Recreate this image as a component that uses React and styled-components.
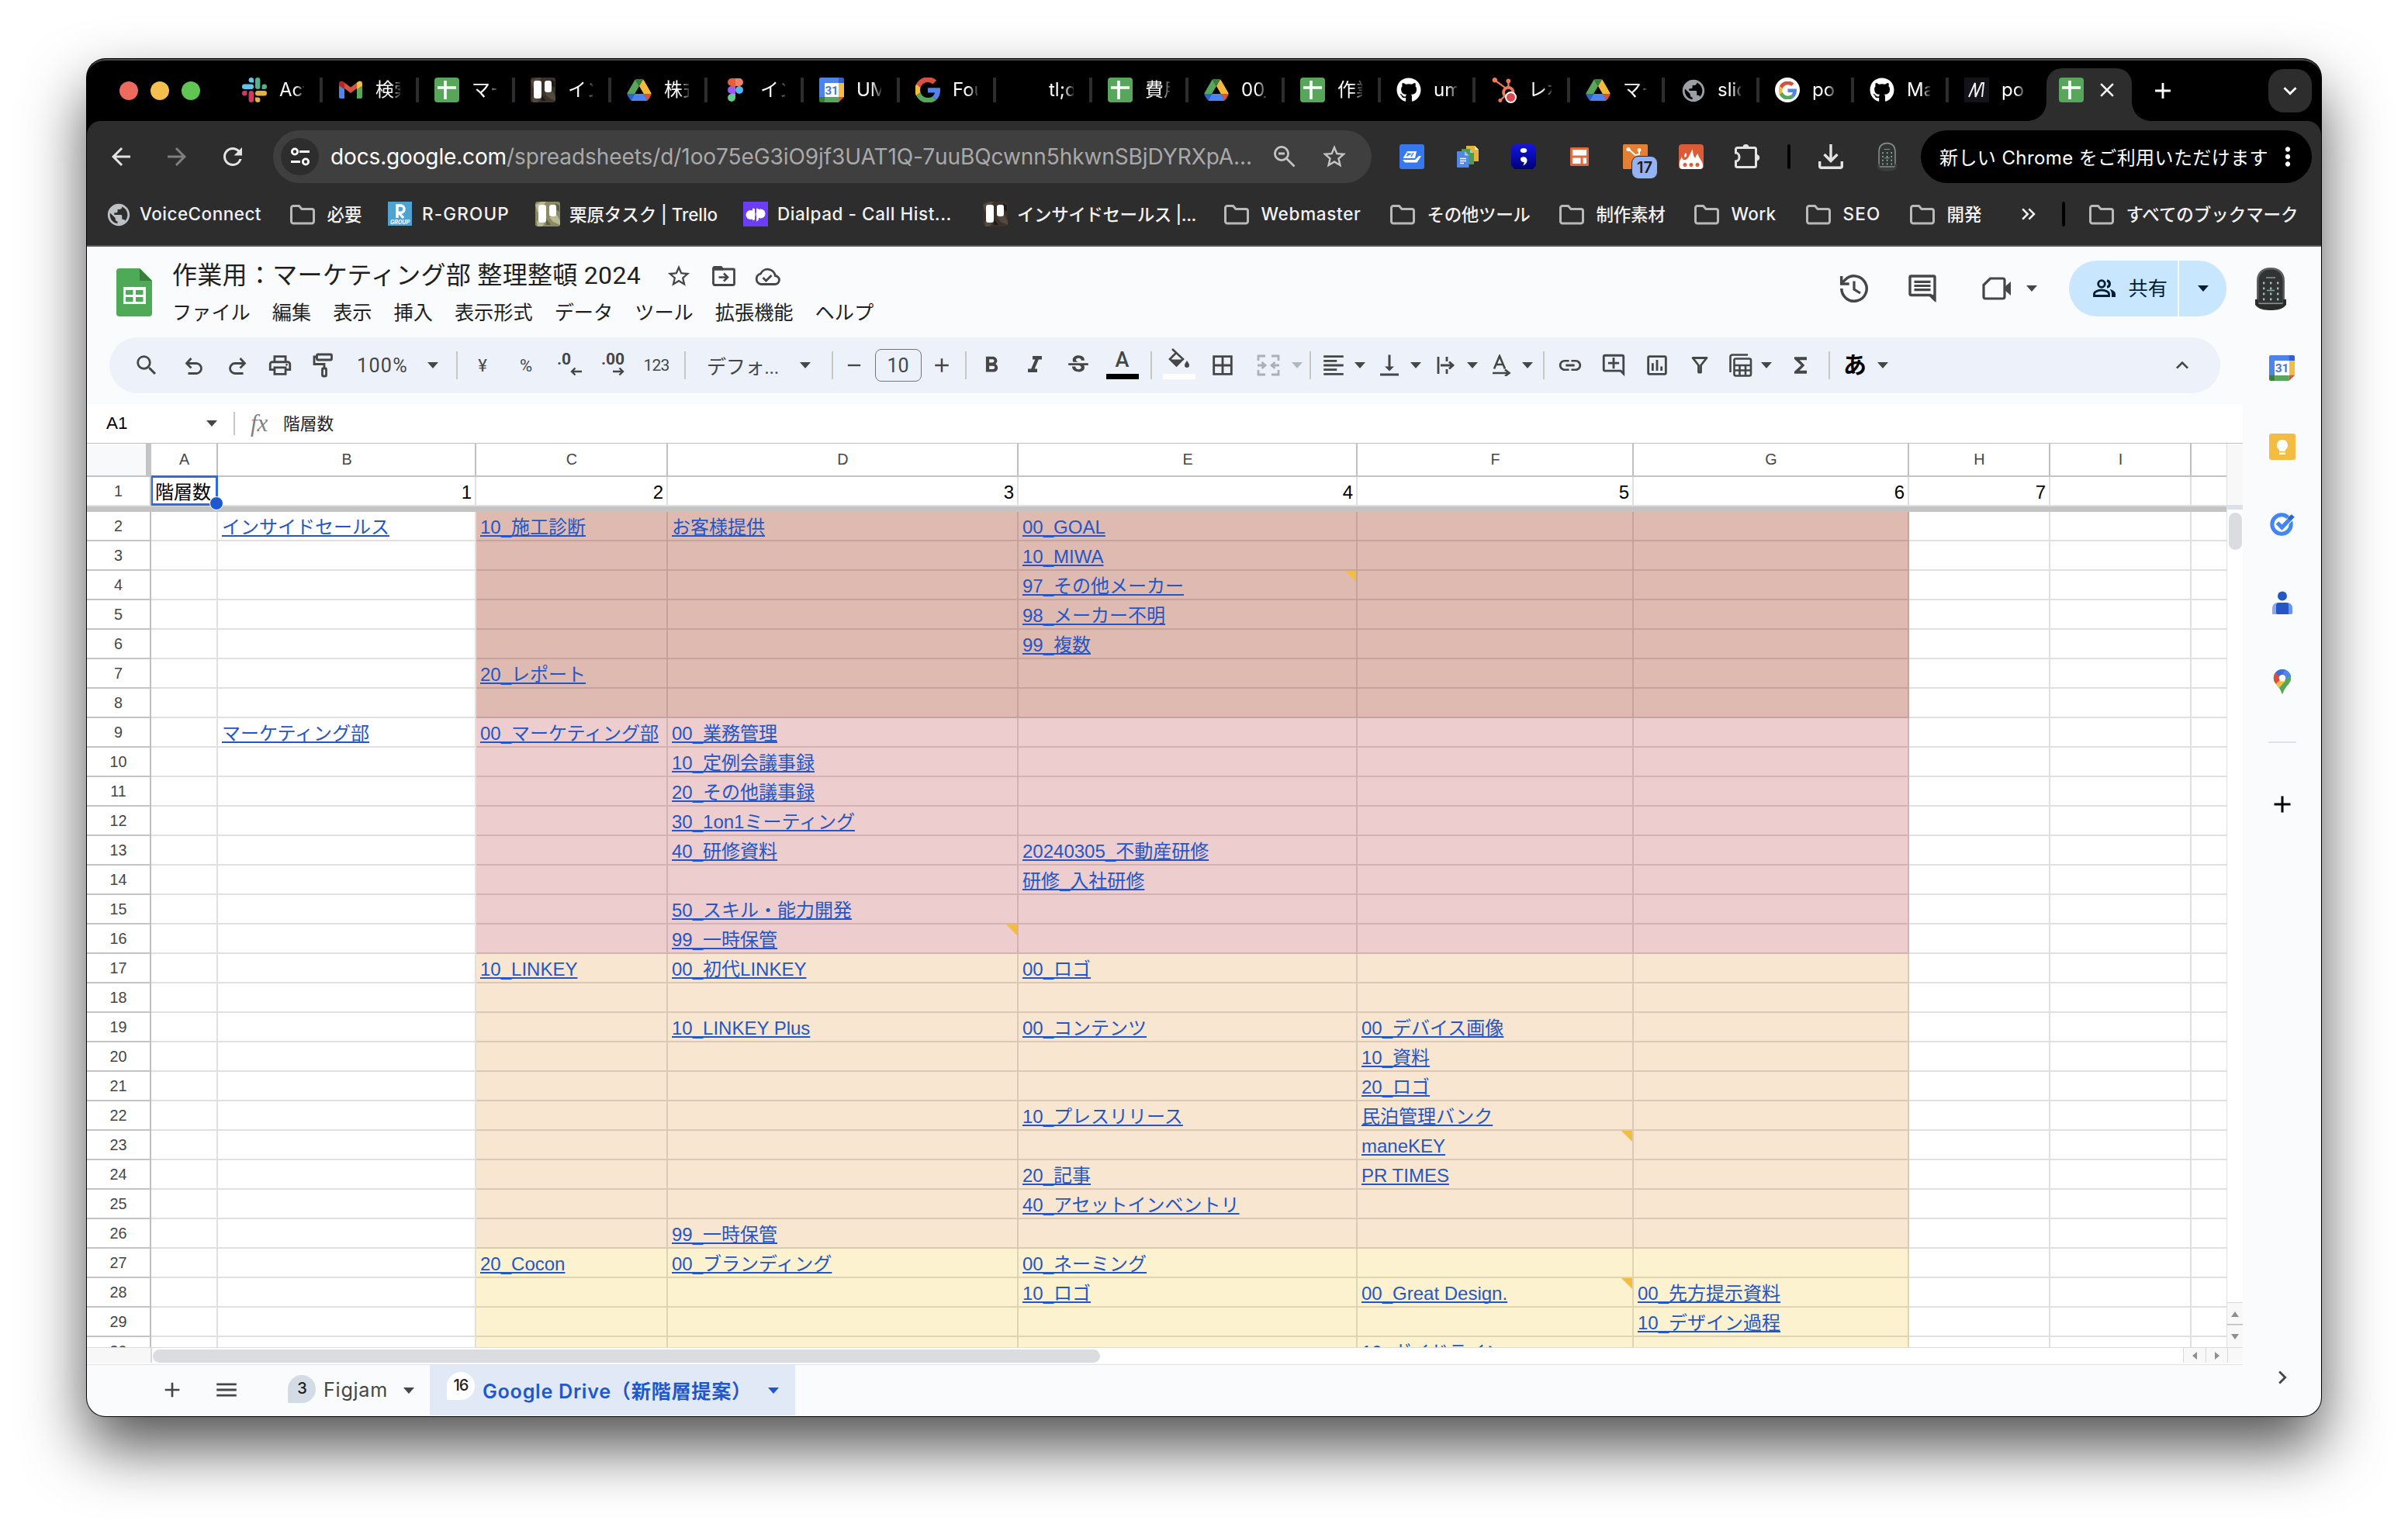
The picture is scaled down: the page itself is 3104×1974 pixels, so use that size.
import React, { useLayoutEffect, useRef, useState } from "react";
import styled, { createGlobalStyle, css } from "styled-components";
import {
  MdSearch, MdUndo, MdRedo, MdOutlinePrint, MdFormatBold, MdFormatItalic, MdStrikethroughS,
  MdBorderAll, MdFormatAlignLeft, MdVerticalAlignBottom, MdInsertLink,
  MdOutlineAddComment, MdOutlineInsertChart, MdFunctions, MdKeyboardArrowUp, MdStarBorder,
  MdMenu, MdAdd, MdRemove, MdChevronRight, MdArrowBack,
  MdArrowForward, MdRefresh, MdMoreVert, MdClose, MdKeyboardArrowDown, MdPublic,
  MdKeyboardDoubleArrowRight,
} from "react-icons/md";
import { FaGithub, FaHubspot } from "react-icons/fa";

const UI = `Inter, "Noto Sans CJK JP", sans-serif`;
const ROBOTO = `Roboto, "Noto Sans CJK JP", sans-serif`;
const ARIAL = `"Liberation Sans", "Noto Sans CJK JP", sans-serif`;

const Global = createGlobalStyle`
  * { box-sizing: border-box; }
  html, body { margin: 0; background: #fff; }
  body { width: 3104px; height: 1974px; overflow: hidden; }
  svg { display: block; flex: none; }
`;

/* ---------- text that spreads to a set width ---------- */
const FitSpan = styled.span`
  display: inline-block;
  white-space: pre;
  flex: none;
  color: ${(p) => p.$color || "inherit"};
`;
function Fit({ w, color, children }) {
  const ref = useRef(null);
  const [ls, setLs] = useState(0);
  useLayoutEffect(() => {
    const natural = ref.current.getBoundingClientRect().width;
    setLs((w - natural) / Array.from(children).length);
  }, [w, children]);
  return <FitSpan ref={ref} $color={color} style={{ letterSpacing: `${ls}px` }}>{children}</FitSpan>;
}

/* ---------- window ---------- */
const Desktop = styled.div`
  width: 3104px;
  height: 1974px;
  padding: 76px 112px 0;
  overflow: hidden;
  background: #fff;
`;
const Window = styled.div`
  width: 2880px;
  height: 1750px;
  display: flex;
  flex-direction: column;
  overflow: hidden;
  border-radius: 24px;
  background: #000;
  box-shadow: 0 0 0 1px #000, 0 40px 80px rgba(0, 0, 0, 0.68);
`;

/* ---------- tab strip ---------- */
const TabStrip = styled.div`
  height: 80px;
  flex: none;
  display: flex;
  align-items: center;
  background: #000;
  border-top: 2px solid #4c4c4c;
  border-radius: 24px 24px 0 0;
  font: 400 24px ${UI};
  color: #fff;
`;
const Lights = styled.div`
  display: flex;
  gap: 16px;
  width: 200px;
  padding-left: 42px;
`;
const Light = styled.i`
  width: 24px;
  height: 24px;
  border-radius: 50%;
  background: ${(p) => p.$c};
`;
const Tab = styled.div`
  width: ${(p) => p.$w}px;
  height: 32px;
  margin-bottom: 2px;
  flex: none;
  display: flex;
  align-items: center;
  gap: 16px;
  border-right: ${(p) => (p.$last ? "0" : "4px solid #2d2d2d")};
  padding-left: ${(p) => (p.$first ? 0 : 20)}px;
`;
const TabText = styled.div`
  width: ${(p) => p.$w}px;
  overflow: hidden;
  white-space: nowrap;
  line-height: 36px;
  mask-image: linear-gradient(90deg, #000 60%, rgba(0, 0, 0, 0.2) 100%);
`;
const ActiveTab = styled.div`
  align-self: flex-end;
  width: 110px;
  height: 68px;
  margin-left: 4px;
  flex: none;
  display: flex;
  align-items: center;
  gap: 15px;
  padding: 0 0 12px 16px;
  background: #2d2d2d;
  border-radius: 20px 20px 0 0;
  position: relative;
  &::before, &::after {
    content: "";
    position: absolute;
    bottom: 0;
    width: 24px;
    height: 24px;
  }
  &::before { left: -24px; background: radial-gradient(circle at 0 0, transparent 23.5px, #2d2d2d 24px); }
  &::after { right: -24px; background: radial-gradient(circle at 100% 0, transparent 23.5px, #2d2d2d 24px); }
`;
const NewTab = styled.div`
  margin-left: 23px;
`;
const TabMenu = styled.div`
  width: 56px;
  height: 56px;
  margin: 0 12px 0 auto;
  display: grid;
  place-items: center;
  border-radius: 20px;
  background: #2d2d2d;
`;

/* ---------- browser toolbar ---------- */
const Chrome = styled.div`
  height: 162px;
  flex: none;
  background: #2d2d2d;
  border-radius: 18px 18px 0 0;
  border-bottom: 2px solid #545457;
  color: #e3e3e3;
  font-family: ${UI};
`;
const NavRow = styled.div`
  height: 92px;
  display: flex;
  align-items: center;
`;
const NavBtn = styled.div`
  width: 72px;
  display: grid;
  place-items: center;
  opacity: ${(p) => (p.$dim ? 0.45 : 1)};
`;
const NavGroup = styled.div`
  display: flex;
  width: 240px;
  padding-left: 8px;
`;
const UrlBar = styled.div`
  width: 1416px;
  height: 68px;
  flex: none;
  display: flex;
  align-items: center;
  padding-left: 10px;
  border-radius: 34px;
  background: #3f3f3f;
  font-size: 28px;
`;
const SiteInfo = styled.div`
  width: 49px;
  height: 48px;
  margin-right: 15px;
  border-radius: 50%;
  display: grid;
  place-items: center;
  background: #2d2d2d;
`;
const UrlIcon = styled.div`
  margin-left: ${(p) => p.$ml}px;
`;
const Extensions = styled.div`
  display: flex;
  align-items: center;
  flex: none;
  width: 708px;
  padding-left: 16px;
`;
const Ext = styled.div`
  width: 72px;
  height: 48px;
  flex: none;
  display: flex;
  align-items: center;
  justify-content: center;
  position: relative;
`;
const ExtBadge = styled.div`
  position: absolute;
  left: 31px;
  top: 23px;
  width: 34px;
  height: 30px;
  border: 1px solid #2d2d2d;
  border-radius: 9px;
  background: #94b3f4;
  color: #1b1b1b;
  font: 600 20px/28px ${UI};
  text-align: center;
`;
const DarkSep = styled.i`
  width: 4px;
  height: 32px;
  flex: none;
  border-radius: 2px;
  background: #000;
  margin-left: ${(p) => p.$ml || 0}px;
  margin-right: ${(p) => p.$mr || 0}px;
`;
const UpdatePill = styled.div`
  width: 504px;
  height: 68px;
  flex: none;
  display: flex;
  align-items: center;
  padding-left: 24px;
  border-radius: 34px;
  background: #000;
  color: #fff;
  font-size: 24px;
`;
const PillText = styled.div`
  padding-bottom: 2px;
`;
const PillMenu = styled.div`
  margin-left: 6px;
`;
const Bookmarks = styled.div`
  height: 64px;
  display: flex;
  align-items: center;
  padding: 0 0 8px 24px;
  font-size: 22.5px;
  font-weight: 500;
  color: #f1f1f1;
`;
const Bookmark = styled.div`
  width: ${(p) => p.$w}px;
  flex: none;
  display: flex;
  align-items: center;
  gap: ${(p) => (p.$folder ? 15.5 : 12)}px;
  & > span { margin-bottom: 2px; }
`;

/* ---------- document header ---------- */
const Page = styled.div`
  flex: 1;
  display: flex;
  flex-direction: column;
  background: #f9fbfd;
  color: #1f1f1f;
`;
const DocHeader = styled.div`
  height: 106px;
  flex: none;
  display: flex;
  align-items: flex-start;
  padding: 0 45px 0 38px;
`;
const LogoBox = styled.div`
  padding-top: 28px;
  width: 72px;
`;
const TitleCol = styled.div`
  padding-top: 8px;
`;
const TitleRow = styled.div`
  height: 54px;
  display: flex;
  align-items: center;
  font: 400 32px ${ROBOTO};
  padding-bottom: 3px;
  color: #1f1f1f;
`;
const TitleIcon = styled.div`
  width: 58px;
  margin-left: ${(p) => p.$ml || 0}px;
  padding-top: 9px;
  display: grid;
  place-items: center;
  color: #444746;
`;
const MenuRow = styled.div`
  height: 42px;
  display: flex;
  align-items: center;
  gap: 28px;
  font: 400 25.2px ${ROBOTO};
  white-space: nowrap;
`;
const HeaderRight = styled.div`
  margin: 18px 0 0 auto;
  height: 72px;
  display: flex;
  align-items: center;
  color: #444746;
`;
const HeaderBtn = styled.div`
  width: 88px;
  display: grid;
  place-items: center;
`;
const MeetBtn = styled.div`
  width: 145px;
  display: flex;
  align-items: center;
  gap: 19px;
  padding-left: 33px;
`;
const Share = styled.div`
  width: 203px;
  height: 72px;
  margin-right: 37px;
  display: flex;
  border-radius: 36px;
  overflow: hidden;
  color: #001d35;
  gap: 2px;
  font: 400 25.2px ${ROBOTO};
`;
const ShareMain = styled.div`
  width: 140px;
  padding-left: 31px;
  display: flex;
  align-items: center;
  gap: 15.5px;
  background: #c8e6fd;
  & > span { margin-bottom: 4px; }
`;
const ShareMore = styled.div`
  flex: 1;
  display: flex;
  align-items: center;
  padding-left: 24px;
  background: #c8e6fd;
`;
const Caret = styled.i`
  flex: none;
  width: 0;
  height: 0;
  border: 7px solid transparent;
  border-top: 8px solid ${(p) => p.$c || "#444746"};
  border-bottom: 0;
  margin-left: ${(p) => p.$ml || 0}px;
`;

/* ---------- body ---------- */
const Body = styled.div`
  flex: 1;
  display: flex;
  min-height: 0;
`;
const Main = styled.div`
  width: 2779px;
  flex: none;
  display: flex;
  flex-direction: column;
  padding-top: 11px;
`;
const Toolbar = styled.div`
  width: 2721px;
  height: 72px;
  margin: 0 0 14px 29px;
  flex: none;
  display: flex;
  align-items: center;
  border-radius: 36px;
  background: #edf2fa;
  color: #444746;
  font: 400 25.2px ${ROBOTO};
`;
const Slot = styled.div`
  width: ${(p) => p.$w || 56}px;
  margin-left: ${(p) => p.$ml || 0}px;
  flex: none;
  display: grid;
  place-items: center;
  white-space: nowrap;
  opacity: ${(p) => (p.$off ? 0.38 : 1)};
  font-size: ${(p) => p.$fs || 25.2}px;
`;
const Kana = styled.b`
  font-weight: 700;
  line-height: 36px;
  color: #000;
`;
const Sep = styled.i`
  width: 2px;
  height: 36px;
  flex: none;
  background: #c7c7c7;
  margin-left: ${(p) => p.$ml || 0}px;
`;
const SizeBox = styled.div`
  width: 60px;
  height: 42px;
  margin-left: 6px;
  display: grid;
  place-items: center;
  border: 1.5px solid #747775;
  border-radius: 8px;
  font-size: 25px;
`;
const Decimal = styled.div`
  height: 36px;
  width: 32px;
  display: flex;
  flex-direction: column;
  font: 700 21px/20px ${ROBOTO};
  align-items: ${(p) => (p.$end ? "center" : "flex-start")};
  svg { align-self: flex-end; }
`;
const ColorStack = styled.div`
  display: flex;
  flex-direction: column;
  align-items: center;
  justify-content: flex-end;
  height: 52px;
  margin-top: -16px;
  font: 500 27px/28px ${ROBOTO};
`;
const ColorBar = styled.i`
  width: 42px;
  height: 7px;
  margin-top: ${(p) => (p.$gap ? p.$gap : 2)}px;
  background: ${(p) => p.$c};
`;
const Collapse = styled.div`
  margin: 0 33px 0 auto;
`;

/* ---------- formula bar ---------- */
const FormulaBar = styled.div`
  height: 51px;
  flex: none;
  display: flex;
  align-items: center;
  padding-left: 25px;
  background: #fff;
  border-bottom: 1px solid #c0c0c0;
  font: 400 22.5px ${ARIAL};
  color: #000;
`;
const NameBox = styled.div`
  width: 129px;
`;
const Thin = styled.i`
  width: 2px;
  height: 30px;
  background: #c7c7c7;
  margin: 0 20px 0 21px;
`;
const Fx = styled.div`
  width: 42px;
  font: italic 400 31px/32px "Liberation Serif", serif;
  color: #808080;
  letter-spacing: 0;
`;
const FormulaText = styled.div`
  font-size: 21.8px;
  padding-bottom: 4px;
  color: #1f1f1f;
`;

/* ---------- grid ---------- */
const GridArea = styled.div`
  height: 1165px;
  flex: none;
  display: flex;
  background: #fff;
`;
const Sheet = styled.div`
  width: 2758px;
  height: 1165px;
  flex: none;
  overflow: hidden;
`;
const cols = css`
  display: grid;
  grid-template-columns: 83px 86px 333px 247px 452px 437px 356px 355px 182px 182px 45px;
`;
const HeadRow = styled.div`
  ${cols}
  height: 43px;
  border-bottom: 2px solid #c4c4c4;
`;
const Corner = styled.div`
  background: #f8f9fa;
  border-right: 7px solid #c4c4c4;
`;
const ColHead = styled.div`
  display: grid;
  place-items: center;
  padding-left: 1px;
  border-right: ${(p) => (p.$last ? 0 : 2)}px solid #c0c0c0;
  font: 400 19.8px ${ARIAL};
  color: #444746;
`;
const Row = styled.div`
  ${cols}
  height: 38px;
`;
const RowHead = styled.div`
  display: grid;
  place-items: center;
  border-right: 2px solid #c0c0c0;
  border-bottom: 2px solid ${(p) => (p.$frozen ? "#e1e1e1" : "#c4c4c4")};
  font: 400 19.8px ${ARIAL};
  color: #444746;
`;
const Cell = styled.div`
  position: relative;
  display: flex;
  align-items: flex-end;
  justify-content: ${(p) => (p.$right ? "flex-end" : "flex-start")};
  padding: 0 4px 2px 5px;
  border-right: ${(p) => (p.$last ? 0 : 2)}px solid rgba(0, 0, 0, 0.12);
  border-bottom: 2px solid rgba(0, 0, 0, 0.12);
  background: ${(p) => p.$bg || "#fff"};
  font: 400 24px/28px ${ARIAL};
  color: #000;
  white-space: nowrap;
`;
const Link = styled.a`
  color: #2456c8;
  text-decoration: underline 2px;
  text-underline-offset: 2px;
  text-decoration-skip-ink: none;
`;
const Note = styled.i`
  position: absolute;
  right: 0;
  top: 0;
  border-top: 14px solid #f2bd42;
  border-left: 14px solid transparent;
`;
const Selection = styled.i`
  position: absolute;
  z-index: 2;
  inset: -2px -2px -1px 0;
  border: 3px solid #2f6ade;
  border-left-width: 2px;
  &::after {
    content: "";
    position: absolute;
    right: -10px;
    bottom: -9px;
    width: 16px;
    height: 16px;
    border-radius: 50%;
    border: 1px solid #fff;
    background: #1f57cf;
  }
`;
const Freeze = styled.div`
  height: 7px;
  background: #c4c4c4;
`;
const VScroll = styled.div`
  width: 21px;
  display: flex;
  flex-direction: column;
  align-items: flex-end;
  border-left: 1px solid #e1e1e1;
`;
const VHead = styled.div`
  width: 20px;
  height: 79px;
  background: #f8f8f8;
`;
const VBand = styled.div`
  width: 20px;
  height: 6px;
  background: #dbe0e9;
`;
const VThumb = styled.div`
  width: 17px;
  height: 48px;
  margin: 4px 1px auto 0;
  border-radius: 9px;
  background: #dadce0;
`;
const VBtn = styled.div`
  width: 20px;
  height: 29px;
  display: grid;
  place-items: center;
  background: #f8f8f8;
  border-top: 1px solid #d9d9d9;
  box-shadow: ${(p) => (p.$mark ? "inset 0 -2px 0 -1px #a8baf0" : "none")};
`;
const Tri = styled.i`
  width: 0;
  height: 0;
  border: 5px solid transparent;
  ${(p) => p.$d === "up" && "border-bottom: 7px solid #8f8f8f; border-top: 0;"}
  ${(p) => p.$d === "down" && "border-top: 7px solid #8f8f8f; border-bottom: 0;"}
  ${(p) => p.$d === "left" && "border-right: 6px solid #8f8f8f; border-left: 0;"}
  ${(p) => p.$d === "right" && "border-left: 6px solid #8f8f8f; border-right: 0;"}
`;
const HScroll = styled.div`
  height: 20px;
  margin-bottom: 2px;
  flex: none;
  display: flex;
  border-top: 1px solid #dcdcdc;
  background: #fff;
`;
const HHead = styled.div`
  width: 84px;
  background: #f7f7f7;
  border-right: 2px solid #d9d9dc;
`;
const HThumb = styled.div`
  width: 1221px;
  height: 17px;
  margin: 2px auto 0 1px;
  border-radius: 9px;
  background: #dadce0;
`;
const HBtn = styled.div`
  width: ${(p) => p.$w}px;
  display: grid;
  place-items: center;
  background: #f8f8f8;
  border-left: 1px solid #d9d9d9;
`;

/* ---------- sheet tabs ---------- */
const SheetBar = styled.div`
  flex: 1;
  display: flex;
  align-items: stretch;
  border-top: 1px solid #e0e2e6;
  padding-left: 75px;
  color: #444746;
  font: 500 25.2px ${UI};
`;
const BarIcon = styled.div`
  width: 70px;
  padding-bottom: 2px;
  display: grid;
  place-items: center;
`;
const SheetTab = styled.div`
  display: flex;
  align-items: center;
  width: ${(p) => p.$w}px;
  margin-bottom: 1px;
  padding-left: ${(p) => p.$pl}px;
  background: ${(p) => (p.$on ? "#e1e9f7" : "transparent")};
  color: ${(p) => (p.$on ? "#1f57cc" : "#444746")};
  font-weight: ${(p) => (p.$on ? 600 : 400)};
  & > span { margin-bottom: 2px; }
`;
const Count = styled.div`
  width: 36px;
  height: 36px;
  margin: 0 10px ${(p) => p.$lift}px 0;
  border-radius: 18px 18px 18px 2px;
  background: ${(p) => p.$bg};
  color: #1f1f1f;
  font: 500 20px/35px ${UI};
  letter-spacing: -1px;
  text-align: center;
`;

/* ---------- side panel ---------- */
const Side = styled.div`
  width: 101px;
  display: flex;
  flex-direction: column;
  align-items: center;
`;
const SideSlot = styled.div`
  height: 101px;
  display: grid;
  place-items: center;
`;
const SideLine = styled.i`
  width: 36px;
  height: 2px;
  margin: 27px 0 28px;
  background: #dfe1e5;
`;
const SideFoot = styled.div`
  margin: auto 0 33px;
  color: #444746;
`;

/* ---------- drawings ---------- */
const Slack = () => (
  <svg width="32" height="32" viewBox="0 0 32 32">
    <g fill="#62c6ea"><rect y="8.6" width="15" height="6.4" rx="3.2" /><path d="M15 6.4h-3.2A3.2 3.2 0 1 1 15 3.2z" /></g>
    <g fill="#57b08c"><rect x="17" width="6.4" height="15" rx="3.2" /><path d="M25.6 15v-3.2a3.2 3.2 0 1 1 3.2 3.2z" /></g>
    <g fill="#e3b04b"><rect x="17" y="17" width="15" height="6.4" rx="3.2" /><path d="M17 25.6h3.2a3.2 3.2 0 1 1-3.2 3.2z" /></g>
    <g fill="#cf3a62"><rect x="8.6" y="17" width="6.4" height="15" rx="3.2" /><path d="M6.4 17v3.2A3.2 3.2 0 1 1 3.2 17z" /></g>
  </svg>
);
const Gmail = () => (
  <svg width="32" height="32" viewBox="0 0 32 32">
    <path d="M1 9.500 8 14v13H3a2 2 0 0 1-2-2z" fill="#4f86ec" />
    <path d="M31 9.500 24 14v13h5a2 2 0 0 0 2-2z" fill="#58a55c" />
    <path d="M8 14V6.500l8 6 8-6V14l-8 6z" fill="#d85140" />
    <path d="M24 6.500l2-1.400c2-1.500 5-.200 5 2.400v3L24 15z" fill="#f2bd42" />
    <path d="M8 6.500 6 5.100C4 3.600 1 4.900 1 7.500v3L8 15z" fill="#b5291e" />
  </svg>
);
const SheetFav = () => (
  <svg width="32" height="32" viewBox="0 0 32 32">
    <rect width="32" height="32" rx="4" fill="#58a55c" />
    <path d="M12.200 4h3.600v24h-3.600zM4 11.200h24v3.600H4z" fill="#fff" />
  </svg>
);
const Trello = ({ light }) => (
  <svg width="32" height="32" viewBox="0 0 32 32">
    <rect width="32" height="32" rx="3" fill={light ? "#8b8a66" : "#3b322b"} />
    <path d="M0 4 8 0h6L3 14zM18 20l10-3 4 8v5l-9-4zM2 25l10 3-3 4H3z" fill={light ? "#b9b890" : "#55483c"} />
    <path d="M26 2l5 3v8l-4-3zM14 22l6 8h-6z" fill={light ? "#5e6244" : "#1f1a18"} />
    <rect x="4" y="4" width="10" height="23" rx="3" fill="#fff" />
    <rect x="18" y="4" width="9" height="15" rx="3" fill="#fff" />
  </svg>
);
const Drive = () => (
  <svg width="32" height="32" viewBox="-1 -4 89.300 86">
    <path d="m6.600 66.850 3.850 6.650c.8 1.400 1.950 2.500 3.300 3.300l13.750-23.800h-27.500c0 1.550.4 3.100 1.200 4.500z" fill="#2d62d0" />
    <path d="m43.650 25-13.750-23.800c-1.350.8-2.500 1.900-3.300 3.300l-25.400 44a9.060 9.060 0 0 0 -1.200 4.500h27.500z" fill="#58a55c" />
    <path d="m73.550 76.800c1.350-.8 2.500-1.900 3.300-3.300l1.600-2.750 7.650-13.250c.8-1.400 1.200-2.950 1.200-4.500h-27.500l5.850 11.500z" fill="#d85140" />
    <path d="m43.650 25 13.750-23.800c-1.350-.8-2.900-1.200-4.500-1.200h-18.500c-1.600 0-3.150.45-4.500 1.200z" fill="#3b7f3c" />
    <path d="m59.800 53h-32.300l-13.750 23.800c1.350.8 2.900 1.200 4.500 1.200h50.800c1.600 0 3.150-.45 4.500-1.200z" fill="#4a84f0" />
    <path d="m73.400 26.500-12.700-22c-.8-1.400-1.950-2.500-3.300-3.300l-13.750 23.800 16.150 28h27.450c0-1.550-.4-3.100-1.200-4.500z" fill="#f2b93c" />
  </svg>
);
const Figma = () => (
  <svg width="32" height="32" viewBox="-6 0 32 30">
    <path d="M5 0h5v10H5A5 5 0 0 1 5 0z" fill="#e5603a" />
    <path d="M10 0h5a5 5 0 0 1 0 10h-5z" fill="#ef8069" />
    <path d="M5 10h5v10H5a5 5 0 0 1 0-10z" fill="#9a5cf5" />
    <circle cx="15" cy="15" r="5" fill="#4fb5f8" />
    <path d="M5 20h5v5a5 5 0 1 1-5-5z" fill="#61cb8b" />
  </svg>
);
const Cal = ({ s = 32 }) => (
  <svg width={s} height={s} viewBox="0 0 32 32">
    <path d="M2 0h24v7H7v19H0V2a2 2 0 0 1 2-2z" fill="#4f83ec" />
    <path d="M25 0h5a2 2 0 0 1 2 2v5h-7z" fill="#2f63c8" />
    <path d="M25 7h7v18h-7z" fill="#f2bd42" />
    <path d="M7 25h18v7H7z" fill="#58a55c" />
    <path d="M0 25h7v7H2a2 2 0 0 1-2-2z" fill="#3b7f3c" />
    <path d="M25 25h7l-7 7z" fill="#e2513f" />
    <path d="M7 7h18v18H7z" fill="#fff" />
    <text x="16" y="21.500" textAnchor="middle" fontFamily="Roboto" fontWeight="700" fontSize="15" fill="#4177e0">31</text>
  </svg>
);
const GoogleG = ({ s = 32 }) => (
  <svg width={s} height={s} viewBox="1 1 46 46">
    <path fill="#d85140" d="M24 9.500c3.540 0 6.710 1.220 9.210 3.600l6.850-6.850C35.900 2.380 30.470 0 24 0 14.620 0 6.510 5.380 2.560 13.220l7.980 6.190C12.430 13.720 17.740 9.500 24 9.500z" />
    <path fill="#5383ec" d="M46.980 24.550c0-1.570-.15-3.090-.38-4.550H24v9.020h12.940c-.58 2.960-2.260 5.480-4.780 7.180l7.730 6c4.510-4.180 7.090-10.360 7.090-17.650z" />
    <path fill="#f2bd42" d="M10.530 28.590c-.48-1.450-.76-2.990-.76-4.590s.27-3.140.76-4.590l-7.980-6.190C.92 16.460 0 20.120 0 24c0 3.880.92 7.540 2.560 10.780l7.970-6.190z" />
    <path fill="#58a55c" d="M24 48c6.480 0 11.930-2.130 15.890-5.810l-7.730-6c-2.150 1.450-4.920 2.300-8.160 2.300-6.260 0-11.570-4.220-13.470-9.910l-7.980 6.190C6.510 42.620 14.620 48 24 48z" />
  </svg>
);
const Round = styled.div`
  width: 32px;
  height: 32px;
  flex: none;
  display: grid;
  place-items: center;
  border-radius: 50%;
  background: #fff;
`;
const FavBox = styled.div`
  width: 32px;
  height: 32px;
  flex: none;
  position: relative;
  display: grid;
  place-items: center;
`;
const RedDot = styled.i`
  position: absolute;
  right: -1px;
  bottom: -1px;
  width: 15px;
  height: 15px;
  border: 2px solid #fff;
  border-radius: 50%;
  background: #dc4a50;
`;
const Hub = () => <FavBox><FaHubspot size={32} color="#ee7a59" /><RedDot /></FavBox>;
const Globe = ({ c = "#9aa0a6" }) => <FavBox><MdPublic size={34} color={c} /></FavBox>;
const MFav = () => (
  <svg width="32" height="32" viewBox="0 0 32 32">
    <rect width="32" height="32" fill="#14131a" />
    <path d="M6 25 14 7l.5 18L22.500 7l2.500 0-2 18" fill="none" stroke="#f1f1f1" strokeWidth="2" />
  </svg>
);
const RGroup = () => (
  <svg width="32" height="32" viewBox="0 0 32 32">
    <rect width="31" height="31" fill="#4ea3d3" />
    <path d="M12 21V5h4.500a4.500 4.500 0 0 1 0 9.200H14l6 6.800" fill="none" stroke="#fff" strokeWidth="3.400" />
    <text x="15.500" y="29" textAnchor="middle" fontFamily="Inter" fontWeight="700" fontStyle="italic" fontSize="7" fill="#fff">GROUP</text>
  </svg>
);
const Dialpad = () => (
  <svg width="32" height="32" viewBox="0 0 32 32">
    <rect width="32" height="32" fill="#6b3df5" />
    <circle cx="9.500" cy="17" r="6" fill="#fff" /><circle cx="22.500" cy="15.500" r="6" fill="#fff" />
    <path d="M12 8.500l3 .8v14l-3 1zM17 8.500l3 .8v14l-3 2.500z" fill="#fff" />
  </svg>
);
const Folder = () => (
  <svg width="32" height="28" viewBox="0 0 32 28" fill="none" stroke="#b9b9b9" strokeWidth="3">
    <path d="M4 3.500h7.500l3.500 4h13a2.500 2.500 0 0 1 2.500 2.500v13.500a2.500 2.500 0 0 1-2.500 2.500H4a2.500 2.500 0 0 1-2.500-2.500V6A2.500 2.500 0 0 1 4 3.500z" />
  </svg>
);
const Tune = () => (
  <svg width="28" height="28" viewBox="0 0 28 28" fill="none" stroke="#fff" strokeWidth="2.800">
    <circle cx="7" cy="7.500" r="3.600" /><path d="M13 7.500h13M2 20.500h12" /><circle cx="21" cy="20.500" r="3.600" />
  </svg>
);
const ZoomOut = () => (
  <svg width="30" height="30" viewBox="0 0 30 30" fill="none" stroke="#c4c4c4" strokeWidth="2.800">
    <circle cx="11" cy="11" r="8.600" /><path d="M17.500 17.500l10 10M7 11h8" />
  </svg>
);
const BlueExt = () => (
  <svg width="32" height="32" viewBox="0 0 32 32">
    <rect width="32" height="32" rx="3" fill="#3778ee" />
    <path d="M10 9h12l-2 9H4.500z" fill="#fff" />
    <path d="M4 20h16l5-5h3l-5.500 8.500H7z" fill="#fff" />
    <path d="M9 15l5-2.500-4-.5M15 16l3-5" stroke="#3778ee" strokeWidth="1.400" fill="none" />
  </svg>
);
const DocsExt = () => (
  <svg width="32" height="32" viewBox="0 0 32 32">
    <path d="M14 2h11l5 5v15H14z" fill="#e9b33b" /><path d="M25 2l5 5h-5z" fill="#f8e2a8" />
    <path d="M8 6h11l5 5v15H8z" fill="#4b9a58" /><path d="M19 6l5 5h-5z" fill="#a5d3ac" />
    <path d="M3 9h9l5.500 5.500V30H3a1 1 0 0 1-1-1V10a1 1 0 0 1 1-1z" fill="#5086ee" /><path d="M12 9l5.500 5.500H12z" fill="#a9c5fa" />
    <path d="M6 18.500h8M6 21.500h8M6 24.500h5" stroke="#fff" strokeWidth="1.400" />
  </svg>
);
const SemiExt = () => (
  <svg width="32" height="32" viewBox="0 0 32 32">
    <defs><linearGradient id="navy" x2="0" y2="1"><stop stopColor="#1515e0" /><stop offset="1" stopColor="#00007a" /></linearGradient></defs>
    <path d="M4 0h24l4 5v22l-4 5H4l-4-5V5z" fill="url(#navy)" />
    <ellipse cx="16" cy="8" rx="4.200" ry="3" fill="#fff" />
    <path d="M12 19c0-4 8.500-4 8.500 1.500 0 3.500-2.500 6-5.500 7 1-1.500 2-3 1.500-4.500-2.500.2-4.500-1.500-4.500-4z" fill="#fff" />
  </svg>
);
const LayoutExt = () => (
  <svg width="24" height="24" viewBox="0 0 24 24">
    <rect width="24" height="24" rx="1.500" fill="#e4693f" />
    <path d="M3 3h18v7.500H3zM3 13.500h10.500V21H3zM16.500 13.500H21V21h-4.500z" fill="#fff" />
  </svg>
);
const OrangeExt = () => (
  <svg width="32" height="32" viewBox="0 0 32 32">
    <rect width="32" height="32" rx="1.500" fill="#e57f33" />
    <path d="M7 6l9 8 5-1V8" stroke="#fff" strokeWidth="2" fill="none" />
    <circle cx="7" cy="6.500" r="2.600" fill="#fff" /><circle cx="21" cy="7.500" r="2.400" fill="#fff" />
  </svg>
);
const FireExt = () => (
  <svg width="32" height="32" viewBox="0 0 32 32">
    <rect width="32" height="32" rx="4" fill="#dc5b38" />
    <path d="M1 29c-1-6 1-9 3-13 0 3 2 5 5 4 4-2 6-9 9-14 0 6 1 9 3 12 1-3 2-5 4-6-1 5 7 9 6 17-.5 2-2 3-4 3H5c-2 0-4-1-4-3z" fill="#fff" />
    <path d="M9 11c2 3 1 5-1 6-2-1-1-4 1-6z" fill="#fff" />
    <circle cx="8" cy="26.500" r="2.500" fill="#dc5b38" /><circle cx="16" cy="26.500" r="2.500" fill="#dc5b38" /><circle cx="24" cy="26.500" r="2.500" fill="#dc5b38" />
  </svg>
);
const Puzzle = () => (
  <svg width="34" height="34" viewBox="0 0 34 34">
    <path d="M4.500 5.500h22a2 2 0 0 1 2 2v21a2 2 0 0 1-2 2h-22a2 2 0 0 1-2-2V23c6-.5 6-10.500 0-11V7.500a2 2 0 0 1 2-2z" fill="none" stroke="#e3e3e3" strokeWidth="3" />
    <path d="M11.500 5a4 4 0 0 1 8 0zM29 14a4 4 0 0 1 0 8.500z" fill="#e3e3e3" />
  </svg>
);
const Download = () => (
  <svg width="32" height="32" viewBox="0 0 32 32" fill="none" stroke="#e3e3e3" strokeWidth="3.400">
    <path d="M16 0v20M7.500 13l8.500 8.500 8.500-8.500M1.700 22v6.500a1.800 1.800 0 0 0 1.800 1.800h25a1.800 1.800 0 0 0 1.800-1.800V22" />
  </svg>
);
const Lock = ({ w, h, dim }) => (
  <svg width={w} height={h} viewBox="0 0 40 56" preserveAspectRatio="none">
    <path d="M2 48V18C2 7 9 1 20 1s18 6 18 17v30z" fill={dim ? "#8a8c8c" : "#5c5f5f"} />
    <path d="M4.500 46V19c0-10 6-15.500 15.500-15.500S35.500 9 35.500 19v27z" fill="#303433" />
    <path d="M0 42h4v6h32v-6h4v7l-3 3c-4 3-10 4-17 4s-13-1-17-4l-3-3z" fill={dim ? "#3a3d3c" : "#2a2c2c"} />
    <path d="M5 47.500h30" stroke="#8d9090" strokeWidth="1.200" />
    <path d="M14 14h12" stroke="#8d9090" strokeWidth="1.600" />
    <g fill="#a3bab5">
      {[19.5, 26.5, 33.5, 40.5].map((y) => [10, 19, 28].map((x) => <rect key={`${x}-${y}`} x={x} y={y} width="2.400" height="2.800" />))}
    </g>
    <path d="M15 30.500h10" stroke="#8aa39d" strokeWidth="1.600" />
  </svg>
);
const SheetsLogo = () => (
  <svg width="46" height="62" viewBox="0 0 46 62">
    <path d="M4 0h26l16 16v42a4 4 0 0 1-4 4H4a4 4 0 0 1-4-4V4a4 4 0 0 1 4-4z" fill="#4eaa56" />
    <path d="M30 0l16 16H30z" fill="#357e3b" />
    <path d="M9 24h29v22H9z" fill="#fff" />
    <path d="M12 28h9.500v6H12zM25 28h9.500v6H25zM12 37h9.500v6H12zM25 37h9.500v6H25z" fill="#4eaa56" />
  </svg>
);
const svgp = { fill: "none", stroke: "currentColor", strokeWidth: 2.8 };
const FolderMove = () => (
  <svg width="30" height="26" viewBox="0 0 30 26" {...svgp}>
    <path d="M3 4h24.500a1 1 0 0 1 1 1v17.500a2 2 0 0 1-2 2h-23a2 2 0 0 1-2-2V3a1.500 1.500 0 0 1 1.500-1.500h8.500L14.500 5" />
    <path d="M8.500 14.500H20M15 9.500l5 5-5 5" strokeWidth="2.600" />
    <path d="M2 2h9l3 3.500H2z" fill="currentColor" stroke="none" />
  </svg>
);
const CloudDone = () => (
  <svg width="34" height="24" viewBox="0 0 34 24" {...svgp}>
    <path d="M9 22.500h17.500a5.500 5.500 0 0 0 .8-11A10 10 0 0 0 8.500 8.800 7 7 0 0 0 9 22.500z" />
    <path d="M11.500 14l4 4 7-7" />
  </svg>
);
const History = () => (
  <svg width="38" height="38" viewBox="0 0 38 38" {...svgp} strokeWidth="3.500">
    <path d="M2.800 19A16.200 16.200 0 1 0 8 7.200L3 12" />
    <path d="M2.700 3v10h10" />
    <path d="M19 9.500V20l8 5" strokeWidth="3.200" />
  </svg>
);
const Comment = () => (
  <svg width="36" height="36" viewBox="0 0 36 36" {...svgp} strokeWidth="3.400">
    <path d="M3.500 2h29a1.500 1.500 0 0 1 1.500 1.500V32l-5.500-5.500h-25A1.500 1.500 0 0 1 2 25V3.500A1.500 1.500 0 0 1 3.500 2z" />
    <path d="M34 35v-9h-9z" fill="currentColor" stroke="none" />
    <path d="M7.500 9.300h21M7.500 14.500h21M7.500 19.700h21" strokeWidth="3.200" />
  </svg>
);
const Video = () => (
  <svg width="38" height="30" viewBox="0 0 38 30" {...svgp} strokeWidth="3.200">
    <path d="M10.500 2h16a2.500 2.500 0 0 1 2.500 2.500v21a2.500 2.500 0 0 1-2.500 2.500h-22A2.500 2.500 0 0 1 2 25.500V10.500z" />
    <path d="M29 13l8-7v18l-8-7z" fill="currentColor" stroke="none" />
  </svg>
);
const People = () => (
  <svg width="30" height="24" viewBox="0 0 30 24" fill="none" stroke="#001d35" strokeWidth="2.800">
    <circle cx="11" cy="6" r="4.300" />
    <path d="M1.500 21.500v-2.500c0-3 5-4.800 9.500-4.800s9.500 1.800 9.500 4.800v2.500z" />
    <path d="M18 1.800a4.300 4.300 0 0 1 0 8.400" strokeWidth="3.200" />
    <path d="M21.500 13c4 .8 7.500 3 7.500 6v4h-5v-4c0-2.500-1-4.500-2.500-6z" fill="#001d35" stroke="none" />
  </svg>
);
const Undo = ({ flip }) => (
  <svg width="24" height="26" viewBox="0 0 24 26" {...svgp} transform={flip ? "scale(-1 1)" : undefined}>
    <path d="M4.500 23.500h10.500a6.500 6.500 0 0 0 0-13H3M8.500 4 2.500 10.500l6 6" />
  </svg>
);
const PaintRoller = () => (
  <svg width="28" height="32" viewBox="0 0 28 32" {...svgp}>
    <rect x="5.500" y="2" width="19" height="7" rx="1" /><path d="M5.500 5H2v9.500h13V20" /><rect x="12.500" y="20" width="5" height="10" rx="1" />
  </svg>
);
const Arrow = ({ flip }) => (
  <svg width="16" height="12" viewBox="0 0 16 12" {...svgp} strokeWidth="2.400" transform={flip ? "scale(-1 1)" : undefined}>
    <path d="M16 6H3M7.500 1.500 3 6l4.500 4.500" />
  </svg>
);
const Bucket = () => (
  <svg width="30" height="30" viewBox="0 0 30 30" {...svgp} strokeWidth="2.600">
    <path d="M6 2l14 13-8.500 8.500L3 15l8-8" /><path d="M3.500 15.500h16l-8 8z" fill="currentColor" stroke="none" />
    <path d="M25 17c-2 3-3 4.500-3 6a3 3 0 0 0 6 0c0-1.500-1-3-3-6z" fill="currentColor" stroke="none" />
  </svg>
);
const Merge = () => (
  <svg width="30" height="28" viewBox="0 0 30 28" {...svgp}>
    <path d="M11 2H2v6M19 2h9v6M11 26H2v-6M19 26h9v-6M1 14h9M6.500 10l4.500 4-4.500 4M29 14h-9M23.500 10 19 14l4.500 4" />
  </svg>
);
const Wrap = () => (
  <svg width="24" height="26" viewBox="0 0 24 26" {...svgp}>
    <path d="M2 2v22M13 2v6M13 24v-6M5 13h15M16 8.500l5 4.500-5 4.500" />
  </svg>
);
const Rotate = () => (
  <svg width="26" height="28" viewBox="0 0 26 28" {...svgp} strokeWidth="2.600">
    <path d="M3 18.500 10 2l7 16.500M5.500 13h9M1 24h20M17 19.500l5.500 4.500-5.500 4" />
  </svg>
);
const Filter = () => (
  <svg width="24" height="24" viewBox="0 0 24 24" {...svgp}>
    <path d="M3 2.500h18l-7.500 9.500v9h-3v-9z" strokeLinejoin="round" />
  </svg>
);
const TableIcon = () => (
  <svg width="30" height="30" viewBox="0 0 30 30" {...svgp} strokeWidth="2.600">
    <path d="M1.500 24V4A2.500 2.500 0 0 1 4 1.500h20" /><rect x="6.500" y="6.500" width="21.500" height="22" rx="2" />
    <path d="M6.500 15h21.500M6.500 21.500h21.500M13.500 15v13M21 15v13" />
  </svg>
);
const Keep = () => (
  <svg width="34" height="34" viewBox="0 0 34 34">
    <rect width="34" height="34" rx="3" fill="#f2bd42" />
    <path d="M17 8a7 7 0 0 0-4 12.800V23h8v-2.200A7 7 0 0 0 17 8zM13 24.500h8V27h-8z" fill="#fff" />
  </svg>
);
const Tasks = () => (
  <svg width="34" height="34" viewBox="0 2 34 34">
    <circle cx="16" cy="18" r="12.200" fill="none" stroke="#4285f4" strokeWidth="5" />
    <path d="M9.500 16.500l6.500 6.500L31 7" fill="none" stroke="#f9fbfd" strokeWidth="7" />
    <path d="M10.500 16l6 6L31 7" fill="none" stroke="#4285f4" strokeWidth="5.200" />
    <path d="M23.500 10l5-4.500 3.500 3-4.500 4.500z" fill="#2f63c8" />
  </svg>
);
const Contacts = () => (
  <svg width="28" height="32" viewBox="0 0 28 32">
    <circle cx="14" cy="6.500" r="6" fill="#2456c8" />
    <path d="M8 15h5v15H1v-7c0-5 3-8 7-8z" fill="#8aa8f7" /><path d="M14 15h6c4 0 7 3 7 7v6a2 2 0 0 1-2 2H14z" fill="#6a93f6" />
    <path d="M10 15h9a3 3 0 0 1 3 3v12H8a2 2 0 0 1-2-2v-9a4 4 0 0 1 4-4z" fill="#2456c8" />
  </svg>
);
const Maps = () => (
  <svg width="24" height="32" viewBox="0 0 24 32">
    <defs><clipPath id="pin"><path d="M12 0a11.200 11.200 0 0 1 11.200 11.200c0 5-3 7.500-6 11.300C14.500 26 13.500 28 13 30.500c-.3 1.200-1.700 1.200-2 0-.5-2.500-1.500-4.500-4.200-8-3-3.800-6-6.300-6-11.300A11.200 11.200 0 0 1 12 0z" /></clipPath></defs>
    <g clipPath="url(#pin)">
      <path d="M0 0h24v32H0z" fill="#58a55c" /><path d="M0 22 12 8l4 7L6 26z" fill="#f2bd42" />
      <path d="M0 4h6l6 7L0 22z" fill="#d85140" /><path d="M3 0h14l-5 11-9-7z" fill="#3c6fdc" /><path d="M14 0l10 4v4L12 14z" fill="#5086ee" />
      <path d="M3 4 12 0l3 1-7 8z" fill="#3c6fdc" />
    </g>
    <circle cx="12" cy="11.200" r="4.200" fill="#fff" />
  </svg>
);

/* ---------- data ---------- */
const TABS = [
  ["Act", Slack], ["検索", Gmail], ["マーケ", SheetFav], ["イン", Trello], ["株式", Drive], ["イン", Figma],
  ["UMe", Cal], ["Fou", GoogleG], ["tl;dv", null], ["費用", SheetFav], ["00_", Drive], ["作業", SheetFav],
  ["um", "gh"], ["レポ", Hub], ["マー", Drive], ["slid", Globe], ["po", "round"], ["Ma", "gh"], ["po", MFav],
];
const fav = (K) => {
  if (!K) return <FavBox />;
  if (K === "gh") return <FaGithub size={32} color="#fff" />;
  if (K === "round") return <Round><GoogleG s={23} /></Round>;
  return <K />;
};
const BOOKMARKS = [
  { w: 238, t: "VoiceConnect", tw: 157, i: <Globe c="#bdc1c6" /> },
  { w: 126, t: "必要", tw: 45, f: 1 },
  { w: 190, t: "R-GROUP", tw: 113, i: <RGroup /> },
  { w: 268, t: "栗原タスク | Trello", tw: 191, i: <Trello light /> },
  { w: 309, t: "Dialpad - Call Hist...", tw: 225, i: <Dialpad /> },
  { w: 311, t: "インサイドセールス |...", tw: 231, i: <Trello /> },
  { w: 214, t: "Webmaster", tw: 129, f: 1 },
  { w: 218, t: "その他ツール", tw: 133, f: 1 },
  { w: 174, t: "制作素材", tw: 89, f: 1 },
  { w: 144, t: "Work", tw: 58, f: 1 },
  { w: 134, t: "SEO", tw: 49, f: 1 },
  { w: 138, t: "開発", tw: 45, f: 1 },
];
const MENUS = ["ファイル", "編集", "表示", "挿入", "表示形式", "データ", "ツール", "拡張機能", "ヘルプ"];
const COLS = ["A", "B", "C", "D", "E", "F", "G", "H", "I", ""];
const LINKS = {
  2: { B: "インサイドセールス", C: "10_施工診断", D: "お客様提供", E: "00_GOAL" },
  3: { E: "10_MIWA" }, 4: { E: "97_その他メーカー" }, 5: { E: "98_メーカー不明" }, 6: { E: "99_複数" },
  7: { C: "20_レポート" },
  9: { B: "マーケティング部", C: "00_マーケティング部", D: "00_業務管理" },
  10: { D: "10_定例会議事録" }, 11: { D: "20_その他議事録" }, 12: { D: "30_1on1ミーティング" },
  13: { D: "40_研修資料", E: "20240305_不動産研修" }, 14: { E: "研修_入社研修" },
  15: { D: "50_スキル・能力開発" }, 16: { D: "99_一時保管" },
  17: { C: "10_LINKEY", D: "00_初代LINKEY", E: "00_ロゴ" },
  19: { D: "10_LINKEY Plus", E: "00_コンテンツ", F: "00_デバイス画像" },
  20: { F: "10_資料" }, 21: { F: "20_ロゴ" }, 22: { E: "10_プレスリリース", F: "民泊管理バンク" },
  23: { F: "maneKEY" }, 24: { E: "20_記事", F: "PR TIMES" }, 25: { E: "40_アセットインベントリ" },
  26: { D: "99_一時保管" }, 27: { C: "20_Cocon", D: "00_ブランディング", E: "00_ネーミング" },
  28: { E: "10_ロゴ", F: "00_Great Design.", G: "00_先方提示資料" }, 29: { G: "10_デザイン過程" },
  30: { F: "10_ガイドライン" },
};
const NOTES = { 4: "E", 16: "D", 23: "F", 28: "F" };
const bandColor = (r) => (r <= 8 ? "#dfbab1" : r <= 16 ? "#edcdcd" : r <= 26 ? "#f8e6d1" : "#fcf2d0");
const ROWS = Array.from({ length: 29 }, (_, i) => i + 2);

export default function App() {
  return (
    <>
      <Global />
      <Desktop>
        <Window>
          <TabStrip>
            <Lights><Light $c="#ec6a5e" /><Light $c="#f4bf4f" /><Light $c="#61c554" /></Lights>
            {TABS.map(([t, K], i) => (
              <Tab key={i} $w={i === 0 ? 104 : i < 12 ? 124 : 122} $first={i === 0} $last={i === 18}>
                {fav(K)}
                <TabText $w={i < 12 ? 32 : 30}>{t}</TabText>
              </Tab>
            ))}
            <ActiveTab><SheetFav /><MdClose size={30} color="#fff" /></ActiveTab>
            <NewTab><MdAdd size={34} /></NewTab>
            <TabMenu><MdKeyboardArrowDown size={34} /></TabMenu>
          </TabStrip>

          <Chrome>
            <NavRow>
              <NavGroup>
                <NavBtn><MdArrowBack size={36} /></NavBtn>
                <NavBtn $dim><MdArrowForward size={36} /></NavBtn>
                <NavBtn><MdRefresh size={36} /></NavBtn>
              </NavGroup>
              <UrlBar>
                <SiteInfo><Tune /></SiteInfo>
                <Fit w={227} color="#fff">docs.google.com</Fit>
                <Fit w={961} color="#a9a9a9">/spreadsheets/d/1oo75eG3iO9jf3UAT1Q-7uuBQcwnn5hkwnSBjDYRXpA...</Fit>
                <UrlIcon $ml={27}><ZoomOut /></UrlIcon>
                <UrlIcon $ml={31}><MdStarBorder size={36} color="#c4c4c4" /></UrlIcon>
              </UrlBar>
              <Extensions>
                <Ext><BlueExt /></Ext>
                <Ext><DocsExt /></Ext>
                <Ext><SemiExt /></Ext>
                <Ext><LayoutExt /></Ext>
                <Ext><OrangeExt /><ExtBadge>17</ExtBadge></Ext>
                <Ext><FireExt /></Ext>
                <Ext><Puzzle /></Ext>
                <DarkSep $ml={16} $mr={16} />
                <Ext><Download /></Ext>
                <Ext><Lock w={25} h={38} dim /></Ext>
              </Extensions>
              <UpdatePill>
                <PillText><Fit w={424}>新しい Chrome をご利用いただけます</Fit></PillText>
                <PillMenu><MdMoreVert size={38} /></PillMenu>
              </UpdatePill>
            </NavRow>
            <Bookmarks>
              {BOOKMARKS.map((b) => (
                <Bookmark key={b.t} $w={b.w} $folder={b.f}>
                  {b.f ? <Folder /> : b.i}
                  <Fit w={b.tw}>{b.t}</Fit>
                </Bookmark>
              ))}
              <MdKeyboardDoubleArrowRight size={30} />
              <DarkSep $ml={28} $mr={31} />
              <Bookmark $w={270} $folder><Folder /><Fit w={222}>すべてのブックマーク</Fit></Bookmark>
            </Bookmarks>
          </Chrome>

          <Page>
            <DocHeader>
              <LogoBox><SheetsLogo /></LogoBox>
              <TitleCol>
                <TitleRow>
                  <Fit w={604}>作業用：マーケティング部 整理整頓 2024</Fit>
                  <TitleIcon $ml={20}><MdStarBorder size={34} /></TitleIcon>
                  <TitleIcon><FolderMove /></TitleIcon>
                  <TitleIcon $ml={-2}><CloudDone /></TitleIcon>
                </TitleRow>
                <MenuRow>{MENUS.map((m) => <span key={m}>{m}</span>)}</MenuRow>
              </TitleCol>
              <HeaderRight>
                <HeaderBtn><History /></HeaderBtn>
                <HeaderBtn><Comment /></HeaderBtn>
                <MeetBtn><Video /><Caret /></MeetBtn>
                <Share>
                  <ShareMain><People /><span>共有</span></ShareMain>
                  <ShareMore><Caret $c="#001d35" /></ShareMore>
                </Share>
                <Lock w={40} h={56} />
              </HeaderRight>
            </DocHeader>

            <Body>
              <Main>
                <Toolbar>
                  <Slot $ml={20}><MdSearch size={34} /></Slot>
                  <Slot $ml={5.5} $w={55.5}><Undo /></Slot>
                  <Slot $w={55.5}><Undo flip /></Slot>
                  <Slot $w={55.5}><MdOutlinePrint size={34} /></Slot>
                  <Slot $w={55.5}><PaintRoller /></Slot>
                  <Slot $ml={15.5} $w={65}><Fit w={66}>100%</Fit></Slot>
                  <Caret $ml={26} />
                  <Sep $ml={22.5} />
                  <Slot $ml={4.5} $fs={22}>¥</Slot>
                  <Slot $fs={22}>%</Slot>
                  <Slot><Decimal>.0<Arrow /></Decimal></Slot>
                  <Slot><Decimal $end>.00<Arrow flip /></Decimal></Slot>
                  <Slot $fs={21}><Fit w={33}>123</Fit></Slot>
                  <Sep $ml={8} />
                  <Slot $ml={27} $w={92}><Fit w={93}>デフォ...</Fit></Slot>
                  <Caret $ml={28} />
                  <Sep $ml={26.5} />
                  <Slot $ml={6} $w={42}><MdRemove size={28} /></Slot>
                  <SizeBox>10</SizeBox>
                  <Slot $ml={5} $w={43}><MdAdd size={30} /></Slot>
                  <Sep $ml={8} />
                  <Slot $ml={4}><MdFormatBold size={34} /></Slot>
                  <Slot><MdFormatItalic size={36} /></Slot>
                  <Slot><MdStrikethroughS size={34} /></Slot>
                  <Slot $ml={1}><ColorStack>A<ColorBar $c="#000" $gap={4} /></ColorStack></Slot>
                  <Sep $ml={8} />
                  <Slot $ml={7}><ColorStack><Bucket /><ColorBar $c="#fff" $gap={4} /></ColorStack></Slot>
                  <Slot><MdBorderAll size={34} /></Slot>
                  <Slot $ml={3} $off><Merge /></Slot>
                  <Caret $ml={2} $c="#b4b7bc" />
                  <Sep $ml={9} />
                  <Slot $ml={2} $w={54}><MdFormatAlignLeft size={34} /></Slot>
                  <Caret />
                  <Slot $ml={4} $w={54}><MdVerticalAlignBottom size={36} /></Slot>
                  <Caret />
                  <Slot $ml={5} $w={54}><Wrap /></Slot>
                  <Caret />
                  <Slot $ml={5} $w={52}><Rotate /></Slot>
                  <Caret />
                  <Sep $ml={13} />
                  <Slot $ml={5.5}><MdInsertLink size={34} /></Slot>
                  <Slot><MdOutlineAddComment size={34} /></Slot>
                  <Slot><MdOutlineInsertChart size={34} /></Slot>
                  <Slot $w={54}><Filter /></Slot>
                  <Slot $w={52}><TableIcon /></Slot>
                  <Caret />
                  <Slot $ml={9}><MdFunctions size={32} /></Slot>
                  <Sep $ml={7.5} />
                  <Slot $ml={4.5} $fs={30}><Kana>あ</Kana></Slot>
                  <Caret $ml={1} />
                  <Collapse><MdKeyboardArrowUp size={32} /></Collapse>
                </Toolbar>

                <FormulaBar>
                  <NameBox>A1</NameBox>
                  <Caret />
                  <Thin />
                  <Fx>fx</Fx>
                  <FormulaText>階層数</FormulaText>
                </FormulaBar>

                <GridArea>
                  <Sheet>
                    <HeadRow>
                      <Corner />
                      {COLS.map((c, i) => <ColHead key={i} $last={i === 9}>{c}</ColHead>)}
                    </HeadRow>
                    <Row>
                      <RowHead $frozen>1</RowHead>
                      {COLS.map((c, i) => (
                        <Cell key={i} $right={i > 0} $last={i === 9}>
                          {i === 0 ? "階層数" : i < 8 ? i : ""}
                          {i === 0 && <Selection />}
                        </Cell>
                      ))}
                    </Row>
                    <Freeze />
                    {ROWS.map((r) => (
                      <Row key={r}>
                        <RowHead>{r}</RowHead>
                        {COLS.map((c, i) => (
                          <Cell key={i} $last={i === 9} $bg={i > 1 && i < 7 ? bandColor(r) : undefined}>
                            {LINKS[r]?.[c] && <Link>{LINKS[r][c]}</Link>}
                            {c && NOTES[r] === c && <Note />}
                          </Cell>
                        ))}
                      </Row>
                    ))}
                  </Sheet>
                  <VScroll>
                    <VHead /><VBand /><VThumb />
                    <VBtn $mark><Tri $d="up" /></VBtn>
                    <VBtn><Tri $d="down" /></VBtn>
                  </VScroll>
                </GridArea>

                <HScroll>
                  <HHead />
                  <HThumb />
                  <HBtn $w={29}><Tri $d="left" /></HBtn>
                  <HBtn $w={28}><Tri $d="right" /></HBtn>
                  <HBtn $w={20} />
                </HScroll>

                <SheetBar>
                  <BarIcon><MdAdd size={32} /></BarIcon>
                  <BarIcon><MdMenu size={34} /></BarIcon>
                  <SheetTab $w={227} $pl={44}>
                    <Count $bg="#d3dbe5" $lift={3}>3</Count>
                    <Fit w={83}>Figjam</Fit>
                    <Caret $ml={20} />
                  </SheetTab>
                  <SheetTab $on $w={471} $pl={22}>
                    <Count $bg="#fff" $lift={11}>16</Count>
                    <Fit w={347}>Google Drive（新階層提案）</Fit>
                    <Caret $ml={21} $c="#1f57cc" />
                  </SheetTab>
                </SheetBar>
              </Main>

              <Side>
                <SideSlot><Cal s={33} /></SideSlot>
                <SideSlot><Keep /></SideSlot>
                <SideSlot><Tasks /></SideSlot>
                <SideSlot><Contacts /></SideSlot>
                <SideSlot><Maps /></SideSlot>
                <SideLine />
                <SideSlot><MdAdd size={36} color="#000" /></SideSlot>
                <SideFoot><MdChevronRight size={34} /></SideFoot>
              </Side>
            </Body>
          </Page>
        </Window>
      </Desktop>
    </>
  );
}
